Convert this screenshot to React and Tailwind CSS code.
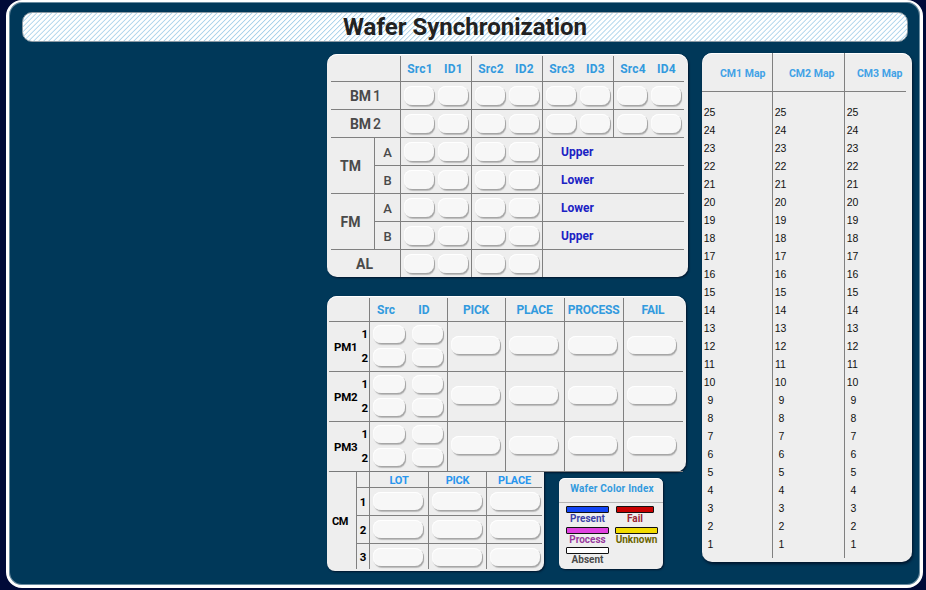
import React from "react";

const FONT = "font-['Roboto','Liberation_Sans',sans-serif]";
const ARIAL = "font-['Liberation_Sans',Arial,sans-serif]";
const LINE = "border-[#808080]";

function Pill({ className = "w-[30px] h-[19px]" }) {
  return (
    <div
      className={`${className} shrink-0 rounded-[8px] bg-[#f7f7f7] shadow-[1px_1px_0_#a6a6a6,1px_2px_1px_#bbb,inset_0_1px_0_#fff,inset_1px_0_0_#fbfbfb]`}
    />
  );
}

function Pair({ last, bottom = true }) {
  return (
    <div className={`flex gap-1 ${last ? "" : "border-r"} ${bottom ? "border-b" : ""} ${LINE} pl-[3px] pt-1`}>
      <Pill />
      <Pill />
    </div>
  );
}

function Label({ children, className = "" }) {
  return (
    <div className={`flex items-center justify-center whitespace-nowrap leading-none ${className}`}>
      {children}
    </div>
  );
}

function HeadPair({ n, last }) {
  return (
    <div
      className={`flex border-b ${LINE} ${last ? "" : "border-r"} text-[12px] font-bold leading-none tracking-[0.2px] text-[#329ade] pt-[7px]`}
    >
      <span className="w-[38px] text-center">{`Src${n}`}</span>
      <span className="w-[29px] text-center">{`ID${n}`}</span>
    </div>
  );
}

function Wide({ children, last }) {
  return (
    <div
      className={`col-span-2 pl-[18px] pt-[8px] text-[12px] leading-[13px] font-bold text-[#1b22c4] ${last ? "" : "border-b"} ${LINE}`}
    >
      {children}
    </div>
  );
}

function ModuleRow({ side, text }) {
  return (
    <>
      <Label className={`border-r border-b ${LINE} pt-[2px] text-[13px] font-medium text-[#4a4a4a]`}>{side}</Label>
      <Pair />
      <Pair />
      <Wide>{text}</Wide>
    </>
  );
}

function SourcePanel() {
  return (
    <section className="h-[223px] w-[361px] rounded-[10px] bg-[#eee] pl-1 pt-[2px] shadow-[inset_0_1px_0_#fff,1px_1px_2px_#00152c]">
      <div className="grid grid-cols-[44px_26px_71px_71px_71px_70px] grid-rows-[26px_repeat(6,28px)_27px]">
        <div className={`col-span-2 border-r border-b ${LINE}`} />
        <HeadPair n={1} />
        <HeadPair n={2} />
        <HeadPair n={3} />
        <HeadPair n={4} last />
        {[1, 2].map((n) => (
          <React.Fragment key={n}>
            <Label className={`col-span-2 border-r border-b ${LINE} pt-px text-[14px] text-[#4a4a4a]`}>
              <b>BM</b>
              <span className="ml-[2px] font-medium">{n}</span>
            </Label>
            <Pair />
            <Pair />
            <Pair />
            <Pair last />
          </React.Fragment>
        ))}
        <Label className={`row-span-2 border-r border-b ${LINE} pr-[4px] pt-px text-[14px] font-bold text-[#4a4a4a]`}>TM</Label>
        <ModuleRow side="A" text="Upper" />
        <ModuleRow side="B" text="Lower" />
        <Label className={`row-span-2 border-r border-b ${LINE} pr-[4px] pt-px text-[14px] font-bold text-[#4a4a4a]`}>FM</Label>
        <ModuleRow side="A" text="Lower" />
        <ModuleRow side="B" text="Upper" />
        <Label className={`col-span-2 border-r ${LINE} pr-[2px] pt-px text-[14px] font-bold text-[#4a4a4a]`}>AL</Label>
        <Pair bottom={false} />
        <Pair bottom={false} />
        <Wide last />
      </div>
    </section>
  );
}

function ProcessPanel() {
  const actions = ["PICK", "PLACE", "PROCESS", "FAIL"];
  return (
    <section className="h-[176px] w-[359px] rounded-[10px] rounded-bl-none bg-[#eee] pl-[2px] pt-[2px] shadow-[inset_0_1px_0_#fff,1px_1px_2px_#00152c]">
      <div className="grid grid-cols-[41px_78px_58px_59px_59px_59px] grid-rows-[24px_50px_50px_50px]">
        <div className={`border-r border-b ${LINE}`} />
        <div className={`flex border-r border-b ${LINE} pt-[6px] text-[12px] font-bold leading-none text-[#329ade]`}>
          <span className="w-[32px] text-center">Src</span>
          <span className="w-[44px] text-center">ID</span>
        </div>
        {actions.map((a, i) => (
          <div
            key={a}
            className={`flex justify-center border-b ${i < 3 ? "border-r" : ""} ${LINE} whitespace-nowrap pt-[6px] pr-px text-[12px] font-bold leading-none tracking-[-0.2px] text-[#329ade]`}
          >
            {a}
          </div>
        ))}
        {[1, 2, 3].map((n) => (
          <React.Fragment key={n}>
            <div className={`flex items-center justify-between border-r border-b ${LINE} pl-[5px] pr-[1px] text-[11.5px] font-bold leading-none text-black`}>
              <span className="mt-[2px] tracking-[-0.2px]">{`PM${n}`}</span>
              <span className="flex flex-col gap-[12.5px]">
                <span>1</span>
                <span>2</span>
              </span>
            </div>
            <div className={`grid grid-cols-[33px_33px] grid-rows-[19px_19px] gap-x-[6px] gap-y-1 border-r border-b ${LINE} pl-[3px] pt-[3px]`}>
              <Pill className="w-[32px] h-[18px]" />
              <Pill className="w-[31px] h-[18px]" />
              <Pill className="w-[32px] h-[18px]" />
              <Pill className="w-[31px] h-[18px]" />
            </div>
            {actions.map((a, i) => (
              <div key={a} className={`border-b ${i < 3 ? "border-r" : ""} ${LINE} pl-[3px] pt-[14px]`}>
                <Pill className="w-[49px] h-[18px]" />
              </div>
            ))}
          </React.Fragment>
        ))}
      </div>
    </section>
  );
}

function CassettePanel() {
  const columns = ["LOT", "PICK", "PLACE"];
  return (
    <section className="h-[99px] w-[217px] rounded-b-[8px] bg-[#eee] shadow-[1px_1px_2px_#00152c]">
      <div className="grid grid-cols-[30px_13px_59px_58px_55px] grid-rows-[16px_28px_28px_25px]">
        <Label className={`row-span-4 border-r ${LINE} pr-[3px] pt-[2px] text-[11px] font-bold tracking-[-0.4px] text-black`}>CM</Label>
        <div className={`border-r border-b ${LINE}`} />
        {columns.map((c, i) => (
          <Label
            key={c}
            className={`border-b ${i < 2 ? "border-r" : ""} ${LINE} pt-px text-[11px] font-bold tracking-[-0.2px] text-[#2996ee]`}
          >
            {c}
          </Label>
        ))}
        {[1, 2, 3].map((n) => (
          <React.Fragment key={n}>
            <Label className={`border-r ${n < 3 ? "border-b" : ""} ${LINE} pt-[3px] text-[11.5px] font-bold text-black`}>{n}</Label>
            {columns.map((c, i) => (
              <div
                key={c}
                className={`${i < 2 ? "border-r" : ""} ${n < 3 ? "border-b" : ""} ${LINE} pl-[3px] pt-1`}
              >
                <Pill className="w-[50px] h-[18px]" />
              </div>
            ))}
          </React.Fragment>
        ))}
      </div>
    </section>
  );
}

function LegendItem({ bar, text, className = "", children }) {
  return (
    <div className={`flex flex-col items-center text-[10px] font-bold leading-[11px] ${text} ${className}`}>
      <div className={`h-[7px] w-full rounded-[1px] border border-[#111] ${bar}`} />
      <span className="whitespace-nowrap">{children}</span>
    </div>
  );
}

function Legend() {
  return (
    <section className="mt-[6px] h-[91px] w-[104px] rounded-[6px] bg-[#eee] shadow-[inset_0_1px_0_#fff,1px_1px_2px_#00152c]">
      <h2 className="h-[25px] border-b border-[#b4b4b4] pl-[2px] pt-[5px] text-center whitespace-nowrap text-[10px] font-bold leading-[12px] tracking-[0.2px] text-[#329ade]">
        Wafer Color Index
      </h2>
      <div className="grid grid-cols-[43px_43px] grid-rows-[21px_20px_20px] gap-x-[6px] pl-[7px] pt-[3px]">
        <LegendItem bar="bg-[#1245f5]" text="text-[#3b3fa8]">Present</LegendItem>
        <LegendItem bar="bg-[#c80000]" text="text-[#9c2430]" className="ml-px w-[38px]">Fail</LegendItem>
        <LegendItem bar="bg-[#e142e1]" text="text-[#983a9c]">Process</LegendItem>
        <LegendItem bar="bg-[#f2dc00]" text="text-[#6b6500]">Unknown</LegendItem>
        <LegendItem bar="bg-white" text="text-[#4a4a4a]">Absent</LegendItem>
      </div>
    </section>
  );
}

function MapPanel() {
  const slots = Array.from({ length: 25 }, (_, i) => 25 - i);
  return (
    <section className="h-[509px] w-[210px] rounded-[10px] bg-[#eee] shadow-[inset_0_1px_0_#fff,1px_2px_3px_#00152c]">
      <div className="grid grid-cols-[71px_72px_61px]">
        {[1, 2, 3].map((n) => (
          <div key={n} className={`h-[505px] ${n < 3 ? "border-r" : ""} ${LINE}`}>
            <div
              className={`h-[39px] border-b ${LINE} whitespace-nowrap pt-[15px] text-[10.5px] font-bold leading-[12px] text-[#42a2e6] ${n === 3 ? "pl-[12px]" : n === 2 ? "pl-[16px]" : "pl-[18px]"}`}
            >
              {`CM${n} Map`}
            </div>
            <div className={`w-[15px] pt-[11px] text-center text-[10.5px] leading-[18px] text-[#111] ${ARIAL}`}>
              {slots.map((s) => (
                <div key={s} className={s < 10 ? "pl-[2px]" : ""}>{s}</div>
              ))}
            </div>
          </div>
        ))}
      </div>
    </section>
  );
}

export default function App() {
  return (
    <div className={`h-[590px] w-[926px] overflow-hidden bg-[#000a38] pl-[6px] ${FONT}`}>
      <main className="h-[588px] w-[917px] rounded-[16px] border-[3px] border-t-2 border-white bg-[#003859] shadow-[inset_0_0_0_1px_#6a8ca0]">
        <header className="ml-[13px] h-[40px] pt-[10px]">
          <h1 className="flex h-[30px] w-[886px] items-center justify-center rounded-[10px] border border-[#8c9aa4] bg-[repeating-linear-gradient(135deg,#fff_0px,#fff_1.8px,#a9d2ea_2.6px,#fff_3.54px)] text-[24px] font-bold leading-none text-[#222]">
            Wafer Synchronization
          </h1>
        </header>
        <div className="flex pl-[318px]">
          <div className="pt-[12px]">
            <SourcePanel />
            <div className="mt-[19px]">
              <ProcessPanel />
              <div className="flex gap-[15px]">
                <CassettePanel />
                <Legend />
              </div>
            </div>
          </div>
          <div className="pl-[14px] pt-[11px]">
            <MapPanel />
          </div>
        </div>
      </main>
    </div>
  );
}
